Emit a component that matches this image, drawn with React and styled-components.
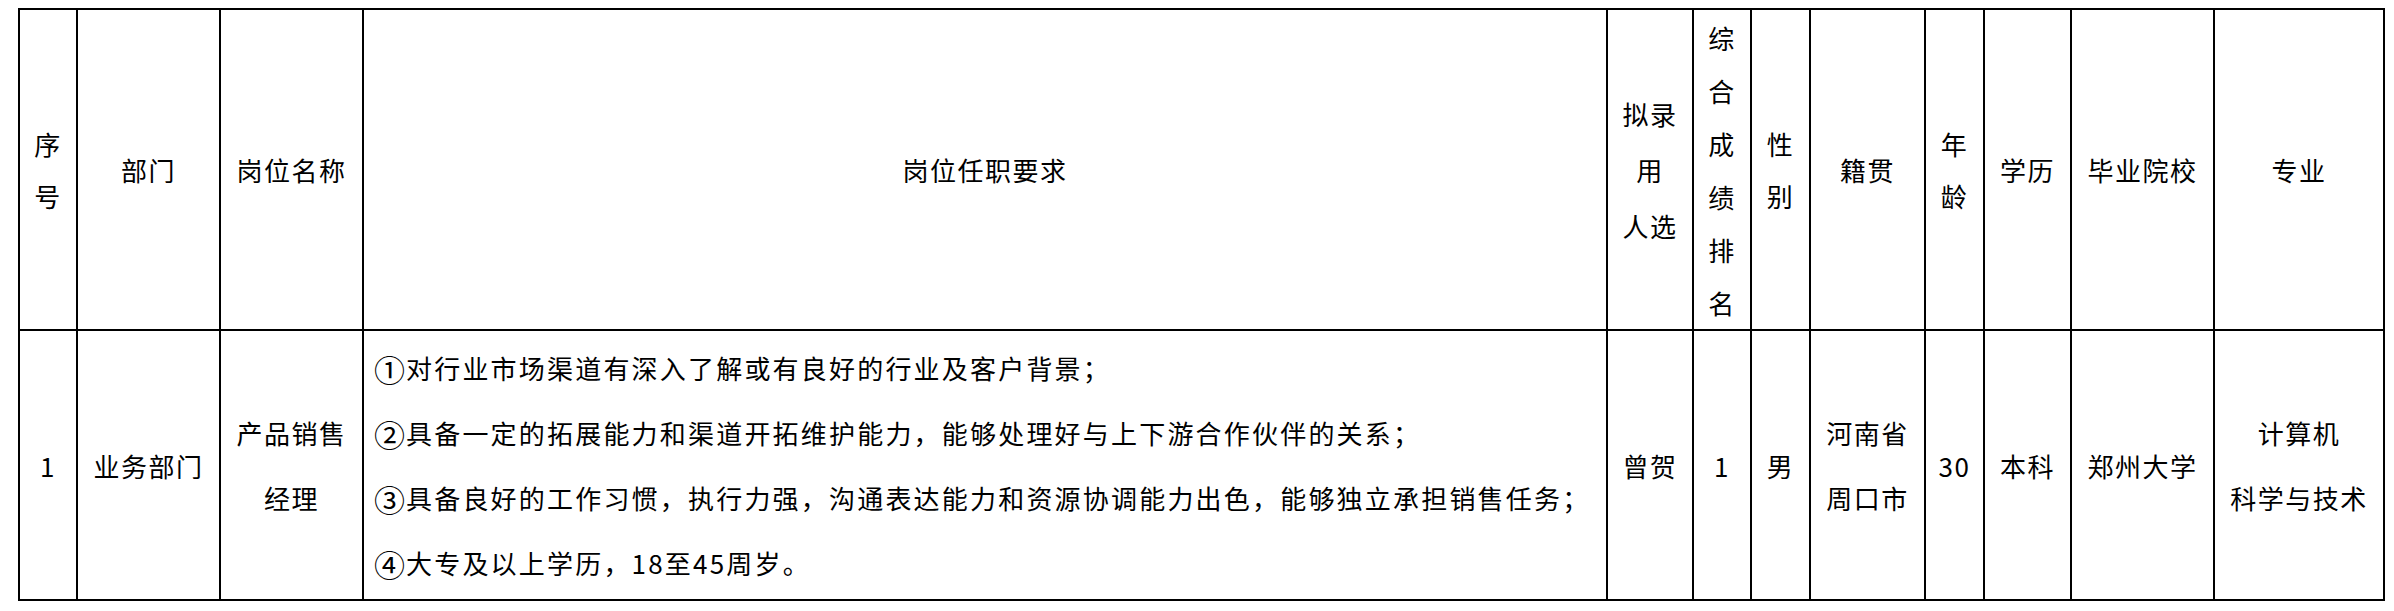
import React from 'react';
import styled, { createGlobalStyle } from 'styled-components';

const GlobalStyle = createGlobalStyle`
  html, body {
    margin: 0;
    padding: 0;
    background: #ffffff;
  }
  body {
    font-family: "Noto Sans CJK SC", "Noto Sans", sans-serif;
    color: #000;
  }
`;

const Page = styled.div`
  padding: 8px 0 0 18px;
`;

const Table = styled.table`
  table-layout: fixed;
  width: 2367px;
  box-sizing: border-box;
  border-collapse: separate;
  border-spacing: 0;
  border-left: 2px solid #000;
  border-top: 2px solid #000;
`;

const Col = styled.col`
  width: ${p => p.$w}px;
`;

const Row = styled.tr`
  height: ${p => p.$h}px;
`;

const Cell = styled.td`
  box-sizing: border-box;
  border-right: 2px solid #000;
  border-bottom: 2px solid #000;
  padding: 0;
  padding-left: ${p => (p.$left ? '10px' : '0')};
  text-align: ${p => (p.$left ? 'left' : 'center')};
  vertical-align: middle;
  font-size: 26px;
  letter-spacing: ${p => (p.$left ? '2.2px' : '1.5px')};
  white-space: nowrap;
  overflow: hidden;
`;

const HeadCell = styled(Cell).attrs({ as: 'th' })`
  font-weight: normal;
`;

const Line = styled.span`
  display: block;
  line-height: ${p => p.$lh || 54}px;
`;

const Circled = styled.span`
  display: inline-block;
  font-size: 31px;
  line-height: 1;
  letter-spacing: 0;
  margin-right: 1px;
  vertical-align: -3px;
`;

const widths = [58, 143, 143, 1244, 86, 58, 59, 115, 59, 87, 143, 170];

const header = [
  { lines: ['序', '号'], lh: 52 },
  { lines: ['部门'] },
  { lines: ['岗位名称'] },
  { lines: ['岗位任职要求'] },
  { lines: ['拟录', '用', '人选'], lh: 56 },
  { lines: ['综', '合', '成', '绩', '排', '名'], lh: 53 },
  { lines: ['性', '别'], lh: 52 },
  { lines: ['籍贯'] },
  { lines: ['年', '龄'], lh: 52 },
  { lines: ['学历'] },
  { lines: ['毕业院校'] },
  { lines: ['专业'] },
];

const duties = [
  ['①', '对行业市场渠道有深入了解或有良好的行业及客户背景；'],
  ['②', '具备一定的拓展能力和渠道开拓维护能力，能够处理好与上下游合作伙伴的关系；'],
  ['③', '具备良好的工作习惯，执行力强，沟通表达能力和资源协调能力出色，能够独立承担销售任务；'],
  ['④', '大专及以上学历，18至45周岁。'],
];

const body = [
  ['1'],
  ['业务部门'],
  ['产品销售', '经理'],
  null,
  ['曾贺'],
  ['1'],
  ['男'],
  ['河南省', '周口市'],
  ['30'],
  ['本科'],
  ['郑州大学'],
  ['计算机', '科学与技术'],
];

export default function App() {
  return (
    <Page>
      <GlobalStyle />
      <Table>
        <colgroup>
          {widths.map((w, i) => (
            <Col key={i} $w={w} />
          ))}
        </colgroup>
        <thead>
          <Row $h={321}>
            {header.map((h, i) => (
              <HeadCell key={i}>
                {h.lines.map(l => (
                  <Line key={l} $lh={h.lh}>{l}</Line>
                ))}
              </HeadCell>
            ))}
          </Row>
        </thead>
        <tbody>
          <Row $h={270}>
            {body.map((lines, i) =>
              lines ? (
                <Cell key={i}>
                  {lines.map(l => (
                    <Line key={l} $lh={65}>{l}</Line>
                  ))}
                </Cell>
              ) : (
                <Cell key={i} $left>
                  {duties.map(([num, text]) => (
                    <Line key={num} $lh={65}>
                      <Circled>{num}</Circled>
                      {text}
                    </Line>
                  ))}
                </Cell>
              )
            )}
          </Row>
        </tbody>
      </Table>
    </Page>
  );
}
